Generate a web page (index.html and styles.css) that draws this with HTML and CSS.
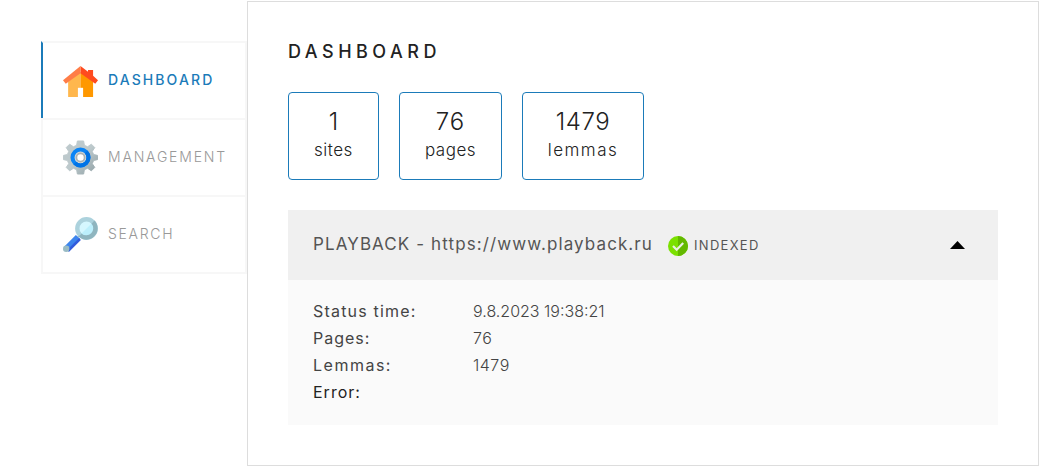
FILE: index.html
```html
<!DOCTYPE html>
<html lang="en">
<head>
<meta charset="utf-8">
<title>Dashboard</title>
<link rel="stylesheet" href="styles.css">
</head>
<body>
<div class="page">
  <nav class="menu">
    <a class="menu-item menu-item-active">
      <svg class="menu-icon" viewBox="0 0 512 448" preserveAspectRatio="none"><path fill="#ffb74d" d="M75 225 256 88V448H75z"/><path fill="#ff9800" d="M256 88 440 225V448H256z"/><path fill="#fff" d="M218 315H294V448H218z"/><path fill="#ff4b1f" d="M256 0 366 83V57H440V140L512 205 472 256 256 105z"/><path fill="#ff7d47" d="M256 0 0 205 40 256 256 105z"/></svg>
      <span class="menu-label label-dashboard">DASHBOARD</span>
    </a>
    <a class="menu-item">
      <svg class="menu-icon" viewBox="0 0 36 36"><defs><linearGradient id="steel" x2="1" y2="1"><stop offset=".5" stop-color="#bdc9cc"/><stop offset=".85" stop-color="#9dacb0"/></linearGradient></defs><path fill="url(#steel)" stroke="url(#steel)" stroke-linejoin="round" d="M14.800 1h6.400l.8 4.500 3.300 1.400 3.900-2.600 3.500 3.500-2.600 3.900 1.400 3.300 4 .8v4.400l-4 .8-1.400 3.300 2.600 3.900-3.500 3.500-3.900-2.600-3.300 1.400-.8 4.500h-6.400l-.8-4.500-3.300-1.400-3.900 2.600-3.500-3.500 2.600-3.900-1.400-3.300-4-.8v-4.400l4-.8 1.400-3.300-2.600-3.900 3.500-3.500 3.900 2.600 3.300-1.400z"/><circle cx="18" cy="18" r="8.200" fill="#d5dadb" stroke="#0b84f5" stroke-width="4.200"/><path d="M23.800 12.200a8.200 8.200 0 0 1-11.600 11.600" fill="none" stroke="#0073e6" stroke-width="4.200"/><circle cx="18" cy="18" r="4.200" fill="#fff" stroke="#a8b1b4" stroke-width="1.800"/></svg>
      <span class="menu-label label-management">MANAGEMENT</span>
    </a>
    <a class="menu-item">
      <svg class="menu-icon" viewBox="0 0 35 35"><path d="m15 20 3-3" stroke="#91b4be" stroke-width="2"/><path d="M3 32 15 20" stroke="#3d85ed" stroke-width="6"/><path d="m5 34 12-12" stroke="#315bdc" stroke-width="2.5"/><circle cx="3.2" cy="31.8" r="3.200" fill="#9abcc4"/><circle cx="23.5" cy="11.5" r="9.2" fill="#d5f7ff" stroke="#acd2dd" stroke-width="4.4"/><path d="M30 5a9.2 9.2 0 0 1-13 13" fill="#bceffc" stroke="#8fb5bf" stroke-width="4.4"/></svg>
      <span class="menu-label label-search">SEARCH</span>
    </a>
  </nav>
  <main class="content">
    <h1 class="title">DASHBOARD</h1>
    <div class="stats">
      <div class="stat stat-sites"><div class="stat-value">1</div><div class="stat-name">sites</div></div>
      <div class="stat stat-pages"><div class="stat-value value-pages">76</div><div class="stat-name name-pages">pages</div></div>
      <div class="stat stat-lemmas"><div class="stat-value value-lemmas">1479</div><div class="stat-name name-lemmas">lemmas</div></div>
    </div>
    <section class="site">
      <header class="site-header">
        <span class="site-name">PLAYBACK - https://www.playback.ru</span>
        <svg class="status-icon" viewBox="0 0 20 20"><circle cx="10" cy="10" r="10" fill="#7be000"/><path d="M10 0a10 10 0 0 1 0 20z" fill="#63b800"/><path d="m5 10 3.7 3.7L15.2 7" fill="none" stroke="#e9efe2" stroke-width="2.2"/></svg>
        <span class="status">INDEXED</span>
        <svg class="arrow" viewBox="0 0 15 8"><path d="M0 8 7.5 0 15 8z"/></svg>
      </header>
      <dl class="details">
        <dt class="term-status">Status time:</dt><dd class="time">9.8.2023 19:38:21</dd>
        <dt>Pages:</dt><dd>76</dd>
        <dt class="term-lemmas">Lemmas:</dt><dd>1479</dd>
        <dt class="error">Error:</dt><dd></dd>
      </dl>
    </section>
  </main>
</div>
</body>
</html>
```
FILE: styles.css
```css
* { box-sizing: border-box; }
body { margin: 0; background: #fff; font-family: Inter, sans-serif; font-weight: 300; color: #222; }
.page { display: flex; height: 467px; padding: 1px 3px 1px 41px; }
.menu { width: 206px; margin-top: 40px; }
.menu-item { display: flex; align-items: center; height: 77px; padding-left: 20px; border: 2px solid #f7f7f7; border-bottom: 0; }
.menu-item:last-child { height: 79px; border-bottom: 2px solid #f7f7f7; }
.menu-item-active { border-left-color: #1b7bb9; }
.menu-icon { width: 35px; height: 35px; margin-right: 10px; flex: none; }
.menu-item-active .menu-icon { height: 31px; margin-top: 1px; }
.menu-label { margin-bottom: 2px; font-size: 14px; line-height: 20px; color: #999; }
.label-dashboard { font-weight: 500; color: #1b7bb9; letter-spacing: 2.1px; }
.label-management { letter-spacing: 1.8px; }
.label-search { letter-spacing: 1.7px; }
.content { flex: 1; height: 465px; padding: 40px; border: 1px solid #ddd; }
.title { margin: 0; font-size: 18px; line-height: 20px; font-weight: 500; letter-spacing: 4.5px; }
.stats { display: flex; gap: 20px; margin-top: 30px; }
.stat { height: 88px; padding-top: 14px; border: 1px solid #1b7bb9; border-radius: 4px; text-align: center; }
.stat-sites { width: 91px; }
.stat-pages { width: 103px; }
.stat-lemmas { width: 122px; }
.stat-value { font-size: 24px; line-height: 30px; }
.value-pages { letter-spacing: 1px; }
.value-lemmas { letter-spacing: .6px; }
.stat-name { font-size: 17px; line-height: 26px; letter-spacing: .5px; }
.name-lemmas { letter-spacing: 1.5px; }
.site { margin-top: 30px; background: #fafafa; }
.site-header { display: flex; align-items: center; height: 70px; padding: 0 33px 0 25px; background: #f0f0f0; color: #555; }
.site-name { width: 340px; margin-bottom: 2px; font-size: 17px; font-weight: 400; letter-spacing: 1.1px; white-space: nowrap; }
.status-icon { width: 20px; height: 20px; margin: 2px 6px 0 15px; }
.status { font-size: 13px; font-weight: 400; letter-spacing: 1.3px; }
.arrow { width: 15px; height: 8px; margin-left: auto; margin-bottom: 1px; }
.details { display: grid; grid-template-columns: 160px 1fr; grid-auto-rows: 27px; height: 145px; margin: 0; padding: 18px 25px; font-size: 16px; line-height: 27px; color: #444; }
.details dt { font-weight: 400; letter-spacing: 1px; }
.details .term-status { letter-spacing: 1.2px; }
.details .term-lemmas { letter-spacing: 1.5px; }
.details dd { margin: 0; letter-spacing: .5px; }
.details .time { letter-spacing: 0; }
.details .error { color: #222; }
```
